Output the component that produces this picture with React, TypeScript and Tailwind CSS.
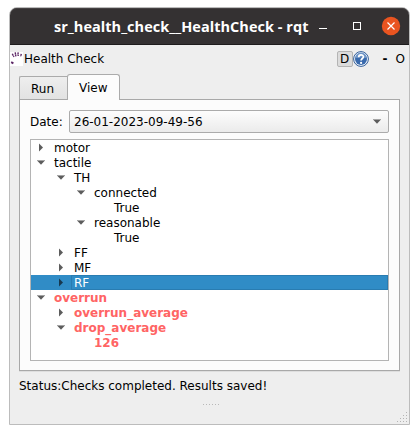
type Row = {
  label: string;
  pad: string;
  arrow?: "right" | "down";
  alert?: boolean;
  selected?: boolean;
};

const rows: Row[] = [
  { label: "motor", pad: "pl-[3px]", arrow: "right" },
  { label: "tactile", pad: "pl-[3px]", arrow: "down" },
  { label: "TH", pad: "pl-[23px]", arrow: "down" },
  { label: "connected", pad: "pl-[43px]", arrow: "down" },
  { label: "True", pad: "pl-[63px]" },
  { label: "reasonable", pad: "pl-[43px]", arrow: "down" },
  { label: "True", pad: "pl-[63px]" },
  { label: "FF", pad: "pl-[23px]", arrow: "right" },
  { label: "MF", pad: "pl-[23px]", arrow: "right" },
  { label: "RF", pad: "pl-[23px]", arrow: "right", selected: true },
  { label: "overrun", pad: "pl-[3px]", arrow: "down", alert: true },
  { label: "overrun_average", pad: "pl-[23px]", arrow: "right", alert: true },
  { label: "drop_average", pad: "pl-[23px]", arrow: "down", alert: true },
  { label: "126", pad: "pl-[43px]", alert: true },
];

function Arrow({ dir, color = "#5c5c5c" }: { dir: "right" | "down"; color?: string }) {
  return (
    <svg width="15" height="15" viewBox="0 0 15 15" className="block">
      {dir === "right" ? (
        <path d="M5 3.5 L9 7.5 L5 11.5Z" fill={color} />
      ) : (
        <>
          <path d="M3 5.5H11L7 9.7Z" fill={color} />
          <path d="M3 5.5H11" stroke="#a4a4a4" />
        </>
      )}
    </svg>
  );
}

function TreeRow({ row }: { row: Row }) {
  const color = row.selected ? "text-white" : row.alert ? "text-[#ff6464] font-bold" : "text-black";
  return (
    <div className={`flex h-[15px] ${row.pad} ${row.selected ? "bg-[#308cc6]" : ""}`}>
      <div className="w-[17px] shrink-0">
        {row.arrow && <Arrow dir={row.arrow} color={row.selected ? "#17384f" : undefined} />}
      </div>
      <div
        className={`h-[15px] pl-[3px] leading-[17px] ${color} ${
          row.selected ? "flex-1 shadow-[inset_0_0_0_1px_#297cb1]" : ""
        }`}
      >
        {row.label}
      </div>
    </div>
  );
}

function TitleBar() {
  return (
    <div className="flex h-[37px] items-center rounded-t-[7px] border-b border-[#1e1c1d] bg-[#343132] pl-[44px] shadow-[inset_0_1px_0_#454243]">
      <div className="w-[256px] whitespace-nowrap pt-px font-['Open_Sans','Noto_Sans',sans-serif] text-[14.5px] leading-[20px] font-bold tracking-[0.03px] text-white">
        sr_health_check__HealthCheck - rqt
      </div>
      <svg width="99" height="36" viewBox="0 0 99 36" fill="none">
        <path d="M9 20.5H17" stroke="#fff" />
        <rect x="43.5" y="14.5" width="7" height="7" stroke="#fff" />
        <circle cx="81" cy="18" r="9.2" fill="#e95420" />
        <path d="M77.5 14.5L84.5 21.5M84.5 14.5L77.5 21.5" stroke="#fff" strokeWidth="1.2" />
      </svg>
    </div>
  );
}

function HandIcon() {
  return (
    <svg width="13" height="14" viewBox="0 0 13 14" className="mr-px shrink-0">
      <path d="M0 0H13V14H0Z" fill="#fff" />
      <g stroke="#5b2464" strokeWidth="1.4" fill="none">
        <path d="M2.3 1.8L3.9 5M5.2 .4L5.9 4.4M8 .4L8.2 4M11.3 1.8L10.6 4.6" strokeDasharray="2.2 .4" />
        <path d="M1.2 10.2L3.4 11.4" strokeWidth="1.9" />
      </g>
    </svg>
  );
}

function HelpIcon() {
  return (
    <svg width="16" height="16" viewBox="0 0 16 16" fill="none">
      <circle cx="8" cy="8" r="7.4" fill="#f4f8fc" stroke="#315c98" strokeWidth="1" />
      <circle cx="8" cy="8" r="6" fill="#396aad" />
      <path d="M2.5 7A5.5 5.5 0 0 1 13.5 7Q8 6 2.5 7Z" fill="#6f96c8" />
      <path d="M5.7 6.2C5.7 3.1 10.4 3.2 10.4 5.8C10.4 7.6 8.1 7.5 8.1 9.6" stroke="#fff" strokeWidth="1.7" />
      <circle cx="8.1" cy="11.9" r="1.1" fill="#fff" />
    </svg>
  );
}

export default function App() {
  return (
    <div className="h-[434px] w-[419px] bg-white pt-[7px] pl-[9px] font-['DejaVu_Sans',sans-serif] text-[12px] text-black">
      <div className="flex h-[418px] w-[401px] flex-col rounded-t-[8px] border border-[#bcbcbc] bg-[#eeeeee]">
        <TitleBar />
        <div className="flex h-[29px] items-center pr-[4px] pb-px">
          <HandIcon />
          <div className="flex-1 leading-[15px]">Health Check</div>
          <div className="flex h-[16px] w-[16px] items-center justify-center rounded-[2px] border border-[#b4b4b4] bg-[#dcdcdc]">D</div>
          <HelpIcon />
          <div className="w-[27px] pl-[14px] font-bold">-</div>
          <div>O</div>
        </div>
        <div className="flex h-[26px] items-end pl-[9px]">
          <div className="flex h-[24px] w-[48px] items-center rounded-tl-[2px] border border-r-0 border-[#ababab] bg-linear-to-b from-[#eeeeee] to-[#e2e2e2] pt-px pl-[11px]">
            Run
          </div>
          <div className="z-10 flex h-[26px] w-[53px] items-center rounded-t-[3px] border border-b-0 border-[#ababab] bg-[#fcfcfc] pl-[11px]">
            View
          </div>
        </div>
        <div className="-mt-px ml-[9px] h-[272px] w-[381px] border border-[#a8a8a8] bg-[#fcfcfc] px-[10px] pt-[10px] shadow-[0_1px_0_#dedede]">
          <div className="flex h-[23px] items-center">
            <div className="w-[39px]">Date:</div>
            <div className="flex h-[23px] flex-1 items-center justify-between rounded-[2px] border border-[#ababab] bg-linear-to-b from-[#fdfdfd] to-[#ebebeb] pr-[3px] pl-[4px]">
              <span>26-01-2023-09-49-56</span>
              <Arrow dir="down" />
            </div>
          </div>
          <div className="mt-[6px] h-[222px] w-[359px] border border-[#b4b4b4] bg-white">
            {rows.map((row, i) => (
              <TreeRow key={i} row={row} />
            ))}
          </div>
        </div>
        <div className="mt-[7px] ml-[9px] h-[15px] leading-[17px]">Status:Checks completed. Results saved!</div>
        <svg width="18" height="3" viewBox="0 0 18 3" className="mt-[10px] ml-[192px]">
          <path d="M1 1.5H18" stroke="#b8b8b8" strokeDasharray="1 2" />
        </svg>
        <svg width="12" height="12" viewBox="0 0 12 12" className="mt-[4px] ml-[386px]" fill="none">
          <path d="M10 2.5H11M7 5.5H11M4 8.5H11M1 11.5H11" stroke="#b4b4b4" strokeDasharray="1 2" />
        </svg>
      </div>
    </div>
  );
}
